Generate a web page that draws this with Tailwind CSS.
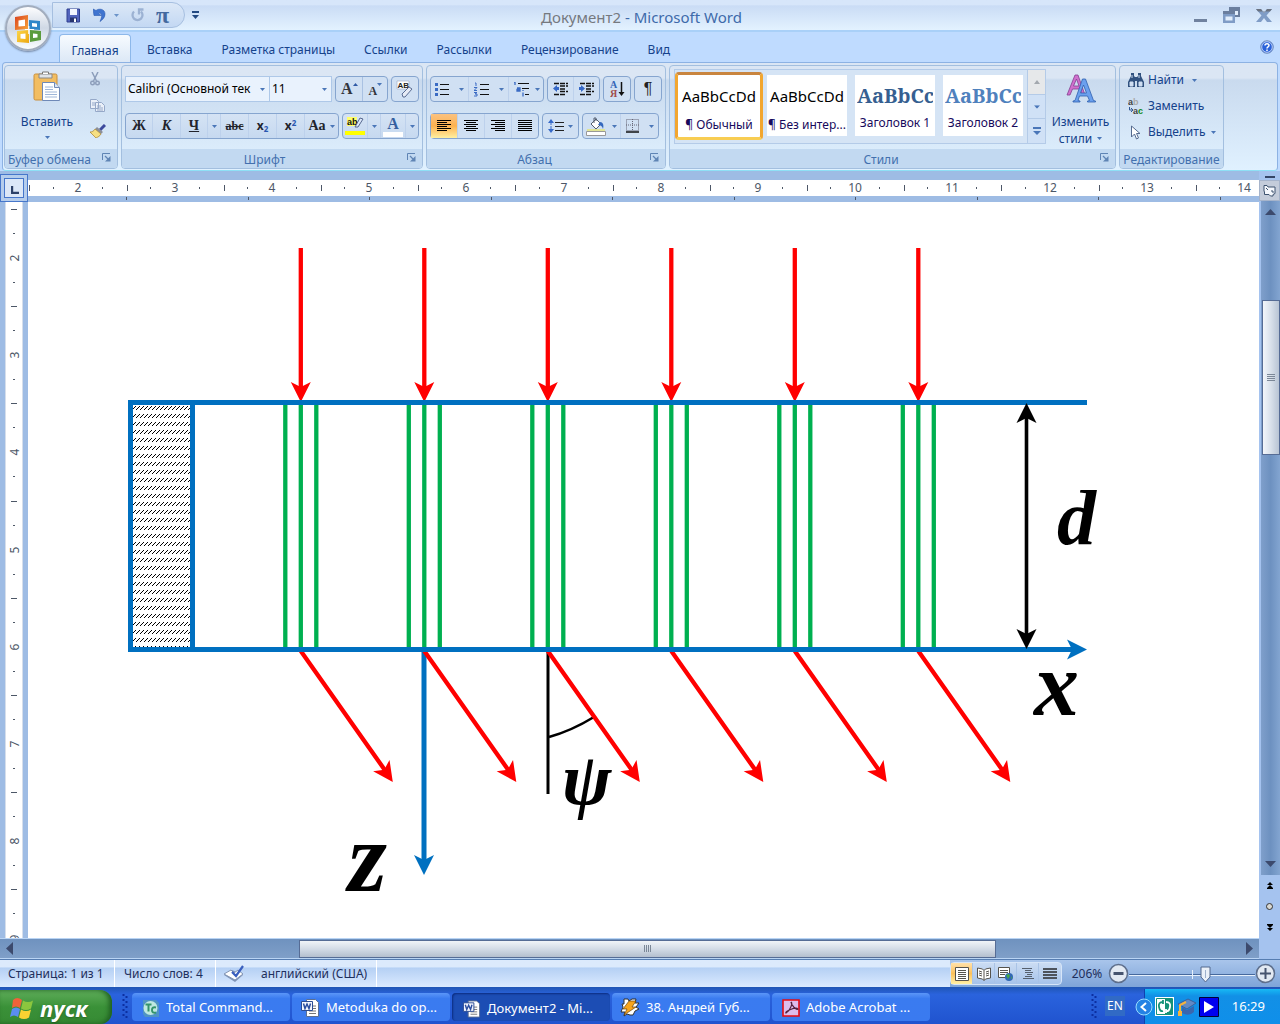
<!DOCTYPE html>
<html lang="ru">
<head>
<meta charset="utf-8">
<title>Документ2 - Microsoft Word</title>
<script src="https://cdn.jsdelivr.net/npm/@tailwindcss/browser@4"></script>
</head>
<body class="flex h-screen flex-col overflow-hidden bg-[#bfdbff] font-['Noto_Sans',sans-serif] text-xs text-[#15428b]">
<svg class="absolute size-0" aria-hidden="true">
  <defs>
    <symbol id="caret" viewBox="0 0 5 3"><path d="M0 0h5L2.500 3z" fill="#4a76b8"/></symbol>
    <symbol id="launch" viewBox="0 0 9 9"><path d="M.5 7V.5H8" fill="none" stroke="#5f84b4"/><path d="M3 3l3 3" stroke="#5f84b4" stroke-width="1.200"/><path d="M8.500 3v5.500H3z" fill="#5f84b4"/></symbol>
    <symbol id="word" viewBox="0 0 20 20"><path d="M6.500 1.500h9l3 3v14h-12z" fill="#fff" stroke="#5b6f93"/><path d="M9 8h7M9 10.500h7M9 13h7M9 15.500h7" stroke="#777"/><path d="M1.500 3.500h11v9h-11z" fill="#f4f7ff" stroke="#2b4c94"/><path d="M3.500 5.500l1.500 5 2-4.500 2 4.500 1.500-5" fill="none" stroke="#2a4da0" stroke-width="1.500"/></symbol>
    <linearGradient id="orange" x2="1" y2="1"><stop stop-color="#d9411e"/><stop offset="1" stop-color="#f9a63a"/></linearGradient>
    <linearGradient id="yellow" x2="1" y2="1"><stop stop-color="#fbd64a"/><stop offset="1" stop-color="#eda60f"/></linearGradient>
  </defs>
</svg>

<header class="relative shrink-0">
  <div class="flex h-8 items-center border-b-2 border-[#a9d0f8] bg-linear-to-b from-[#d7e6fa] from-15% via-[#cadcf5] via-20% to-[#e3f2ff] pl-[52px]">
    <div class="flex h-[26px] w-[133px] items-center rounded-r-full border border-[#a6bfe0] bg-linear-to-b from-[#dce8f7] to-[#c3d8f3] pl-[13px]">
      <button aria-label="Сохранить" class="w-[27px]"><svg width="15" height="15" viewBox="0 0 15 15"><path d="M1 1h12.500v13H1z" fill="#5264bd" stroke="#2e3f8f"/><path d="M4 1h7v6H4z" fill="#f3f6ff"/><path d="M4 9.500h7V14H4z" fill="#27346f"/><path d="M8 10.500h2V14H8z" fill="#fff"/></svg></button>
      <button aria-label="Отменить" class="w-[38px]"><svg width="26" height="14" viewBox="0 0 26 14"><path d="M0 1l3 1.500C6 0 12 1 12 6c0 4-3 6-5 7.500C8 11 9 9 8.500 7 8 5 6 4.500 5.500 5L8 7.500H1z" fill="#3f74d0" stroke="#2a59b0" stroke-width=".6"/><path d="M21 6h5l-2.500 3z" fill="#6b93c9"/></svg></button>
      <button aria-label="Повторить" class="w-[25px]"><svg width="14" height="14" viewBox="0 0 14 14"><path d="M3 3.500a5 5 0 1 0 7 0M12.500 1.500H8v5" fill="none" stroke="#9cb2d3" stroke-width="2.300"/></svg></button>
      <button aria-label="Формула" class="font-['Liberation_Serif',serif] text-2xl leading-6 font-bold text-[#44699f]">π</button>
    </div>
    <button aria-label="Настройка панели" class="ml-[7px]"><svg width="7" height="9" viewBox="0 0 7 9"><path d="M0 0h7v2H0zM0 4h7L3.500 8z" fill="#234a82"/></svg></button>
    <h1 class="grow pt-1 pr-3.5 text-center text-[15px] text-[#3e6aaa]"><span class="text-[#75797f]">Документ2</span> - Microsoft Word</h1>
    <div class="flex items-center gap-4 pr-2 pl-24">
      <button aria-label="Свернуть" class="mt-3"><svg width="13" height="4"><path d="M0 0h13v3H0z" fill="#70829f"/></svg></button>
      <button aria-label="Восстановить"><svg width="17" height="16" viewBox="0 0 17 16"><path d="M6 0h11v10H6z" fill="#6a7e9e"/><path d="M8 4h7v4H8z" fill="#e2eefc"/><path d="M0 4h12v12H0z" fill="#7f9cc6"/><path d="M0 4h12v3H0z" fill="#6a7e9e"/><path d="M2.500 9.500h7v4h-7z" fill="#e2eefc"/></svg></button>
      <button aria-label="Закрыть"><svg width="16" height="13" viewBox="0 0 16 13"><path d="M0 0h5l3 4 3-4h5l-5.500 6.500L16 13h-5L8 9l-3 4H0l5.500-6.500z" fill="#7f9cc6"/><path d="M0 0h5l3 4 3-4h5l-2 2.500H2z" fill="#6a7280"/></svg></button>
    </div>
  </div>
  <nav class="flex h-[30px] items-end gap-[5px] pr-1.5 pl-[59px] text-xs">
    <button class="h-7 w-[72px] rounded-t border border-b-0 border-[#8db8ea] bg-linear-to-b from-[#f7fbff] to-[#dce8f6] pt-1">Главная</button>
    <button class="-ml-px h-7 px-3 pt-1">Вставка</button>
    <button class="h-7 px-3 pt-1">Разметка страницы</button>
    <button class="h-7 px-3 pt-1">Ссылки</button>
    <button class="h-7 px-3 pt-1">Рассылки</button>
    <button class="h-7 px-3 pt-1">Рецензирование</button>
    <button class="h-7 px-3 pt-1">Вид</button>
    <button aria-label="Справка" class="mb-2 ml-auto"><svg width="14" height="14" viewBox="0 0 14 14"><circle cx="7" cy="7" r="6.300" fill="#2b62d9" stroke="#7a94bd"/><circle cx="7" cy="7" r="5.300" fill="none" stroke="#dce9ff" stroke-width=".8"/><path d="M5 5.500c0-2.500 4-2.300 4 0C9 7 7 6.800 7 8.500M7 9.500v1.500" fill="none" stroke="#fff" stroke-width="1.500"/></svg></button>
  </nav>
  <button aria-label="Office" class="absolute top-[5px] left-[5px] size-[46px] rounded-full border-2 border-[#a2adbe] bg-linear-to-b from-[#fdfdfe] via-[#cfd8e5] to-[#fbfdff] shadow-[0_1px_2px_#6f819e]">
    <svg class="mx-auto" width="32" height="32" viewBox="0 0 32 32" fill="none"><path d="M3 5l13-2v14l-13 1z" fill="url(#orange)"/><path d="M6.500 8.500l6.500-1v6.500l-6.500.500z" fill="#fff"/><path d="M17 8l11 1v9l-11-1z" fill="#2f86c9"/><path d="M20 11l5 .5v3.500l-5-.5z" fill="#fff"/><path d="M5 19l12-1v13l-12-1z" fill="url(#yellow)"/><path d="M8.500 22l5-.5v5.500l-5-.5z" fill="#fff"/><path d="M18 18l11 1v9l-11 2z" fill="#5b9b3c"/><path d="M21 21.500l4.500.500v3.500l-4.500.500z" fill="#fff"/><path d="M13 17.500h9M16.800 14v8" stroke="#fff" stroke-width="1.200"/></svg>
  </button>
</header>

<section aria-label="Лента" class="mx-0.5 flex h-[109px] shrink-0 gap-[3px] rounded border border-[#8db2e3] border-b-[#8ee0f5] bg-linear-to-b from-[#dbe6f4] from-14% via-[#c9daee] via-16% to-[#e0f1ff] pt-0.5 pb-px pl-px">
  <div class="flex w-[114px] flex-col overflow-hidden rounded border border-[#a3bfdf]">
    <div class="flex grow">
      <button class="flex w-[84px] flex-col items-center pt-1">
        <svg width="28" height="32" viewBox="0 0 28 32"><rect x="1" y="4" width="23" height="26" rx="1.500" fill="#f2bd61" stroke="#c98f3c"/><path d="M6 4h13v4H6z" fill="#dfe3e8" stroke="#888"/><path d="M9.500 4V2h6v2" fill="#fff" stroke="#777"/><path d="M9.500 12.500h12l5 5v13h-17z" fill="#fff" stroke="#6f89b7"/><path d="M21.500 12.500v5h5" fill="#dbe5f3" stroke="#6f89b7"/><path d="M12 17h8M12 19.500h8M12 22h12M12 24.500h12M12 27h12" stroke="#9fb6d8"/></svg>
        <span class="mt-2.5 leading-5">Вставить</span>
        <svg class="mt-1" width="5" height="3"><use href="#caret"/></svg>
      </button>
      <div class="flex flex-col items-start gap-3 pt-1.5 pl-px">
        <button aria-label="Вырезать" class="h-3.5"><svg width="10" height="14" viewBox="0 0 10 14"><path d="M2 0l4.500 9M8 0L3.500 9" stroke="#8d9ebb" stroke-width="1.500"/><circle cx="2.500" cy="11" r="1.800" fill="none" stroke="#8d9ebb" stroke-width="1.400"/><circle cx="7.500" cy="11" r="1.800" fill="none" stroke="#8d9ebb" stroke-width="1.400"/></svg></button>
        <button aria-label="Копировать" class="h-3.5"><svg width="15" height="13" viewBox="0 0 15 13" fill="#eaf0f9" stroke="#95a8c8"><path d="M.5.5h6l2 2v7h-8zM5.500 3.500h6l3 3v6h-9z"/><path d="M2 4h3M2 6h3M7 7h4M7 9h6M7 11h6"/></svg></button>
        <button aria-label="Формат по образцу" class="h-3.5"><svg width="16" height="14" viewBox="0 0 16 14"><path d="M15 1l-5 5" stroke="#3d4a9d" stroke-width="3"/><path d="M7 3l6 5-2 2-6-5z" fill="#8b8f98"/><path d="M5 5l6 5c-1 2-3 3-5 4L0 8c2 0 4-1 5-3z" fill="#f5df82" stroke="#a67f2c" stroke-width=".7"/></svg></button>
      </div>
    </div>
    <footer class="flex h-[19px] items-center bg-[#c2d9f1] pt-0.5 text-[#4370ae]"><span class="grow text-center whitespace-nowrap">Буфер обмена</span><button aria-label="Буфер обмена: параметры" class="mr-1.5 mb-1 ml-2"><svg width="9" height="9"><use href="#launch"/></svg></button></footer>
  </div>

  <div class="flex w-[302px] flex-col overflow-hidden rounded border border-[#a3bfdf]">
    <div class="flex grow flex-col gap-[11px] px-[3px] pt-2.5">
      <div class="flex h-[26px] gap-[3px]">
        <div class="flex">
          <label class="flex w-[145px] items-center border border-[#aec8e8] bg-[#e9f2fd] pr-1"><select aria-label="Шрифт" class="min-w-0 grow appearance-none overflow-hidden pl-0.5 text-xs text-black"><option>Calibri (Основной тек</option></select><svg class="ml-1 shrink-0" width="5" height="3"><use href="#caret"/></svg></label>
          <label class="flex w-[62px] items-center border border-l-0 border-[#aec8e8] bg-[#e9f2fd] pr-1"><select aria-label="Размер шрифта" class="min-w-0 grow appearance-none pl-0.5 text-xs text-black"><option>11</option></select><svg class="shrink-0" width="5" height="3"><use href="#caret"/></svg></label>
        </div>
        <div class="flex w-[53px] divide-x divide-[#a9c1e2] rounded-sm border border-[#86a5cf] bg-[#d0e0f3] font-['Liberation_Serif',serif] font-bold text-[#33353c]">
          <button class="flex grow items-center justify-center text-base" aria-label="Увеличить размер">A<svg class="mb-2.5" width="5" height="3"><path d="M0 3h5L2.500 0z" fill="#2f59a5"/></svg></button>
          <button class="flex grow items-center justify-center pt-1 text-xs" aria-label="Уменьшить размер">A<svg class="mb-3.5" width="5" height="3"><use href="#caret"/></svg></button>
        </div>
        <button aria-label="Очистить формат" class="flex w-7 items-center justify-center rounded-sm border border-[#86a5cf] bg-[#d0e0f3]"><svg width="18" height="18" viewBox="0 0 18 18"><path d="M1 1h12v8H1z" fill="#fff" stroke="#9aa9c2" stroke-width=".6"/><text x="1.500" y="8" font-family="Liberation Sans" font-weight="bold" font-size="8" fill="#222">AB</text><path d="M6 14l7-7 3 2-7 8H7z" fill="#e6ebf5" stroke="#596c92"/></svg></button>
      </div>
      <div class="flex h-[26px] gap-[3px] font-['Liberation_Serif',serif] text-base font-bold text-[#22242c]">
        <div class="flex w-[214px] divide-x divide-[#bdd1ec] rounded-sm border border-[#86a5cf] bg-linear-to-b from-[#d5e3f4] to-[#c6d9f0]">
          <button class="w-[27px] text-sm">Ж</button>
          <button class="w-7 text-sm italic">К</button>
          <button class="w-[27px] text-sm underline">Ч</button>
          <button aria-label="Вид подчёркивания" class="flex w-[13px] items-center justify-center"><svg width="5" height="3"><use href="#caret"/></svg></button>
          <button class="w-7 text-xs line-through">abc</button>
          <button class="w-7 font-['Noto_Sans',sans-serif] text-xs leading-4">x<sub class="text-[8px] text-[#2a57b0]">2</sub></button>
          <button class="w-7 font-['Noto_Sans',sans-serif] text-xs leading-4">x<sup class="text-[8px] text-[#2a57b0]">2</sup></button>
          <button class="flex grow items-center justify-center gap-1 text-sm">Aa<svg width="5" height="3"><use href="#caret"/></svg></button>
        </div>
        <div class="flex w-[77px] divide-x divide-[#bdd1ec] rounded-sm border border-[#86a5cf] bg-linear-to-b from-[#d5e3f4] to-[#c6d9f0]">
          <button aria-label="Цвет выделения" class="flex w-[25px] items-center justify-center"><svg width="20" height="20" viewBox="0 0 20 20"><path d="M2 1h10v9H2z" fill="#ffff6a"/><text x="2" y="9" font-family="Liberation Sans" font-size="9" font-weight="bold" fill="#111">ab</text><path d="M10 11l5-9 3 1-5 8z" fill="#dce8fa" stroke="#586990"/><path d="M0 15h20v4H0z" fill="#ff0"/></svg></button>
          <button aria-label="Цвета выделения" class="flex w-[13px] items-center justify-center"><svg width="5" height="3"><use href="#caret"/></svg></button>
          <button aria-label="Цвет текста" class="flex w-[25px] flex-col items-center pt-0.5 text-base leading-4 text-[#355f9f]">A<span class="h-[5px] w-5 bg-white"></span></button>
          <button aria-label="Цвета текста" class="flex grow items-center justify-center"><svg width="5" height="3"><use href="#caret"/></svg></button>
        </div>
      </div>
    </div>
    <footer class="flex h-[19px] items-center bg-[#c2d9f1] pt-0.5 text-[#4370ae]"><span class="grow text-center">Шрифт</span><button aria-label="Шрифт: параметры" class="mr-1.5 mb-1"><svg width="9" height="9"><use href="#launch"/></svg></button></footer>
  </div>

  <div class="flex w-60 flex-col overflow-hidden rounded border border-[#a3bfdf]">
    <div class="flex grow flex-col gap-[11px] px-[3px] pt-2.5">
      <div class="flex h-[26px] gap-[3px]">
        <div class="flex w-[114px] divide-x divide-[#bdd1ec] rounded-sm border border-[#86a5cf] bg-[#d0e0f3]">
          <button aria-label="Маркеры" class="flex w-[38px] items-center justify-center gap-2.5"><svg width="14" height="13" viewBox="0 0 14 13"><path d="M0 0h3v3H0zM0 5h3v3H0zM0 10h3v3H0z" fill="#3a6bc4"/><path d="M5 1.500h9M5 6.500h9M5 11.500h9" stroke="#111"/></svg><svg width="5" height="3"><use href="#caret"/></svg></button>
          <button aria-label="Нумерация" class="flex w-10 items-center justify-center gap-2.5"><svg width="15" height="15" viewBox="0 0 15 15"><path d="M1 1h1v3M0 5.500h3l-3 3h3M0 10.500h3l-2 1.500h2v2H0" fill="none" stroke="#3a6bc4"/><path d="M6 2.500h9M6 7.500h9M6 12.500h9" stroke="#111"/></svg><svg width="5" height="3"><use href="#caret"/></svg></button>
          <button aria-label="Многоуровневый список" class="flex grow items-center justify-center gap-1"><svg width="18" height="15" viewBox="0 0 18 15"><path d="M1 0h1v3M4 6h3v3H4V7.500h3M10 8v1m0 1.500v4" fill="none" stroke="#3a6bc4" stroke-width="1.300"/><path d="M5 1.500h11M9 6.500h7M12 12.500h4" stroke="#111"/></svg><svg width="5" height="3"><use href="#caret"/></svg></button>
        </div>
        <div class="flex w-[53px] divide-x divide-[#bdd1ec] rounded-sm border border-[#86a5cf] bg-[#d0e0f3]">
          <button aria-label="Уменьшить отступ" class="flex grow items-center justify-center"><svg width="16" height="14" viewBox="0 0 16 14"><path d="M1 1.500h14M7 4h8M7 7h6M7 9.500h8M1 12.500h12" stroke="#111" stroke-width="1.300" stroke-dasharray="5 1"/><path d="M0 6.500L4 3v2h2v3H4v2z" fill="#3669c8"/></svg></button>
          <button aria-label="Увеличить отступ" class="flex grow items-center justify-center"><svg width="16" height="14" viewBox="0 0 16 14"><path d="M1 1.500h14M7 4h8M7 7h6M7 9.500h8M1 12.500h12" stroke="#111" stroke-width="1.300" stroke-dasharray="5 1"/><path d="M6 6.500L2 3v2H0v3h2v2z" fill="#3669c8"/></svg></button>
        </div>
        <button aria-label="Сортировка" class="flex w-7 items-center justify-center rounded-sm border border-[#86a5cf] bg-[#d0e0f3]"><svg width="15" height="18" viewBox="0 0 15 18" font-family="Liberation Serif" font-size="10" font-weight="bold"><text x="0" y="8" fill="#3566b8">A</text><text x="0" y="17" fill="#a04c4c">Я</text><path d="M11.500 2v11" stroke="#111" stroke-width="1.500"/><path d="M8.500 12h6l-3 4z" fill="#111"/></svg></button>
        <button class="w-7 rounded-sm border border-[#86a5cf] bg-[#d0e0f3] font-['Liberation_Sans',sans-serif] text-base text-[#222]">¶</button>
      </div>
      <div class="flex h-[26px] gap-[3px]">
        <div class="flex w-[109px] divide-x divide-[#bdd1ec] rounded-sm border border-[#86a5cf] bg-[#d0e0f3] stroke-black">
          <button aria-label="По левому краю" class="flex w-[27px] items-center justify-center bg-linear-to-b from-[#fbc27f] via-[#fdb24f] to-[#fff0a0]"><svg width="14" height="12"><path d="M0 .5h14M0 2.500h10M0 4.500h14M0 6.500h10M0 8.500h14M0 10.500h10"/></svg></button>
          <button aria-label="По центру" class="flex w-[27px] items-center justify-center"><svg width="14" height="12"><path d="M0 .5h14M2 2.500h10M0 4.500h14M2 6.500h10M0 8.500h14M2 10.500h10"/></svg></button>
          <button aria-label="По правому краю" class="flex w-[27px] items-center justify-center"><svg width="14" height="12"><path d="M0 .5h14M4 2.500h10M0 4.500h14M4 6.500h10M0 8.500h14M4 10.500h10"/></svg></button>
          <button aria-label="По ширине" class="flex grow items-center justify-center"><svg width="14" height="12"><path d="M0 .5h14M0 2.500h14M0 4.500h14M0 6.500h14M0 8.500h14M0 10.500h14"/></svg></button>
        </div>
        <button aria-label="Междустрочный интервал" class="flex w-[37px] items-center justify-center gap-1 rounded-sm border border-[#86a5cf] bg-[#d0e0f3]"><svg width="16" height="16" viewBox="0 0 16 16"><path d="M3 3v10" stroke="#3669c8" stroke-dasharray="4 1"/><path d="M0 5l3-4 3 4zM0 11l3 4 3-4z" fill="#3669c8"/><path d="M7 4.500h9M7 8.500h9M7 12.500h9" stroke="#222"/></svg><svg width="5" height="3"><use href="#caret"/></svg></button>
        <div class="flex w-[77px] divide-x divide-[#bdd1ec] rounded-sm border border-[#86a5cf] bg-[#d0e0f3]">
          <button aria-label="Заливка" class="flex w-[38px] items-center justify-center gap-1.5"><svg width="20" height="19" viewBox="0 0 20 19"><path d="M5 7l5-5 5 5-5 5z" fill="#fff" stroke="#555f70"/><path d="M8 6V1h2v3" fill="none" stroke="#555f70"/><path d="M14 5c3 0 4 3 3 7-1-3-2-4-5-4z" fill="#3568be"/><path d="M.5 14.500h19v4H.5z" fill="#fff" stroke="#999"/><path d="M1 13h18" stroke="#f0e838"/></svg><svg width="5" height="3"><use href="#caret"/></svg></button>
          <button aria-label="Границы" class="flex grow items-center justify-center gap-2.5"><svg width="13" height="14" viewBox="0 0 13 14"><path d="M.5.500h12v11H.5zM6.500 0v12M0 6h13" fill="none" stroke="#667" stroke-dasharray="1 1"/><path d="M0 13h13" stroke="#111" stroke-width="1.500"/></svg><svg width="5" height="3"><use href="#caret"/></svg></button>
        </div>
      </div>
    </div>
    <footer class="flex h-[19px] items-center bg-[#c2d9f1] pt-0.5 text-[#4370ae]"><span class="grow pr-2 text-center">Абзац</span><button aria-label="Абзац: параметры" class="mr-1.5 mb-1"><svg width="9" height="9"><use href="#launch"/></svg></button></footer>
  </div>

  <div class="flex grow flex-col overflow-hidden rounded border border-[#a3bfdf]">
    <div class="flex grow items-start pt-[3px] pl-1">
      <div class="flex h-[75px] border border-[#b4cbe8] bg-[#d5e4f5] text-[#170a5c]">
        <button class="mt-0.5 flex h-[68px] w-[88px] flex-col overflow-hidden rounded-sm border-3 border-[#f2a62f] border-t-[#c9853f] border-b-[#f8cd52] bg-white pt-[5px] whitespace-nowrap"><span class="w-full text-center text-[15px] leading-8 text-black">AaBbCcDd</span><span class="w-full text-center leading-[26px]">¶ Обычный</span></button>
        <div class="flex gap-2 px-1 pt-[5px]">
          <button class="flex h-[61px] w-20 flex-col overflow-hidden bg-white pt-[5px] text-center whitespace-nowrap"><span class="w-full text-[15px] leading-8 text-black">AaBbCcDd</span><span class="w-full leading-[26px]">¶ Без интер...</span></button>
          <button class="flex h-[61px] w-20 flex-col overflow-hidden bg-white px-0.5 pt-[5px] whitespace-nowrap"><span class="w-full overflow-hidden text-left font-['Noto_Serif','DejaVu_Serif',serif] text-xl leading-8 font-bold text-[#365f91]">AaBbCc</span><span class="w-full text-center leading-[26px]">Заголовок 1</span></button>
          <button class="flex h-[61px] w-20 flex-col overflow-hidden bg-white px-0.5 pt-[5px] whitespace-nowrap"><span class="w-full overflow-hidden text-left font-['Noto_Serif','DejaVu_Serif',serif] text-xl leading-8 font-bold text-[#4f81bd]">AaBbCc</span><span class="w-full text-center leading-[26px]">Заголовок 2</span></button>
        </div>
        <div class="flex w-[18px] flex-col divide-y divide-[#b4cbe8] border-l border-[#b4cbe8]">
          <button aria-label="Вверх" class="flex flex-1 items-center justify-center bg-[#e6e8ea]"><svg width="6" height="4"><path d="M0 4h6L3 0z" fill="#a3a8ae"/></svg></button>
          <button aria-label="Вниз" class="flex flex-1 items-center justify-center bg-[#d0e1f6]"><svg width="6" height="4" viewBox="0 0 5 3"><use href="#caret"/></svg></button>
          <button aria-label="Дополнительно" class="flex flex-1 items-center justify-center bg-[#d0e1f6]"><svg width="8" height="8"><path d="M0 0h8v2H0zM0 4h8L4 8z" fill="#4a76b8"/></svg></button>
        </div>
      </div>
      <button class="flex grow flex-col items-center pt-1"><svg width="30" height="32" viewBox="0 0 30 32"><path fill-rule="evenodd" d="M1 22L9 2h3l7 20h-3l-2-6H6.500l-2.500 6zM7.500 13h5.500L10.500 6z" fill="#d070cd" stroke="#833f91" stroke-width=".8"/><path fill-rule="evenodd" d="M7 29v-1l2-.5L16.500 6h3L27.500 27.500l2 .5v1h-8v-1l2-.5-2-4.500h-8l-1.500 4.500 2 .5v1zM14.500 20h6l-3-8z" fill="#6ba0ee" stroke="#2f5fae" stroke-width=".8"/></svg><span class="mt-2 leading-[17px]">Изменить<br>стили <svg class="mb-0.5 ml-0.5 inline" width="5" height="3"><use href="#caret"/></svg></span></button>
    </div>
    <footer class="flex h-[19px] items-center bg-[#c2d9f1] pt-0.5 text-[#4370ae]"><span class="grow pr-2 text-center">Стили</span><button aria-label="Стили: параметры" class="mr-1.5 mb-1"><svg width="9" height="9"><use href="#launch"/></svg></button></footer>
  </div>

  <div class="mr-[53px] flex w-[105px] flex-col overflow-hidden rounded border border-[#a3bfdf]">
    <div class="flex grow flex-col pt-px pl-2">
      <button class="flex h-[26px] items-center gap-1"><svg width="16" height="14" viewBox="0 0 16 14"><path d="M3 0h3v3l1 1h2l1-1V0h3v3l3 6v5H9V8H7v6H0V9l3-6z" fill="#31517f"/><path d="M2 9h3v4H2zM11 9h3v4h-3zM4 2v3M11 2v3" fill="#cfdef2" stroke="#cfdef2"/></svg>Найти<svg class="ml-1" width="5" height="3"><use href="#caret"/></svg></button>
      <button class="flex h-[26px] items-center gap-1"><svg width="16" height="18" viewBox="0 0 16 18" font-family="Liberation Sans" font-weight="bold" font-size="9"><text y="8" fill="#444">a<tspan fill="#aaa">b</tspan></text><text x="5" y="17" fill="#444">a<tspan fill="#118a22">c</tspan></text><path d="M1.500 10v3h3M3 11l2 2-2 2" fill="none" stroke="#315894"/></svg>Заменить</button>
      <button class="flex h-[26px] items-center gap-1 whitespace-nowrap"><svg width="16" height="15" viewBox="0 0 16 15"><path d="M3.500 1v11l3-3 2 5 2-1-2-4.500h3.500z" fill="#fff" stroke="#566b8f"/></svg>Выделить<svg class="ml-0.5" width="5" height="3"><use href="#caret"/></svg></button>
    </div>
    <footer class="flex h-[19px] items-center justify-center bg-[#c2d9f1] pt-0.5 text-[#4370ae]">Редактирование</footer>
  </div>
</section>

<main class="flex min-h-0 grow bg-[#9ebce4]">
  <div class="flex min-w-0 grow flex-col">
    <div class="flex h-[31px] shrink-0">
      <div class="flex w-7 items-end"><button aria-label="Табуляция" class="flex size-7 items-center justify-center border border-[#4677cb] bg-[#b5cdec]"><span class="flex size-5 items-center justify-center border border-[#4677cb] bg-[#dbe7f7] pt-1 pl-0.5"><svg width="8" height="8"><path d="M1 0v7h7" fill="none" stroke="#2c4168" stroke-width="2.400"/></svg></span></button></div>
      <svg id="hruler" class="h-full min-w-0 grow fill-[#4d5767] text-xs" aria-hidden="true"><rect y="9" width="100%" height="16" fill="#fff"/></svg>
    </div>
    <div class="flex min-h-0 grow">
      <svg id="vruler" class="h-full w-7 shrink-0 fill-[#4d5767] text-xs" aria-hidden="true"><rect x="5" width="18" height="100%" fill="#d5deeb"/><rect x="6" width="16" height="100%" fill="#fff"/></svg>
      <div class="min-w-0 grow bg-white">
        <svg class="size-full" viewBox="28 202 1231 736" preserveAspectRatio="xMinYMin meet" role="img" aria-label="Схема прохождения лучей через слой толщиной d">
          <defs>
            <pattern id="hatch" x="132" y="406" width="4" height="8" patternUnits="userSpaceOnUse"><path d="M0 3h1v1H0zM1 2h1v1H1zM2 1h1v1H2zM3 0h1v1H3z" shape-rendering="crispEdges"/></pattern>
            <path id="head" d="M0 0L-20 -10L-15 0L-20 10z"/>
            <g id="ray">
              <path d="M-15.500 404v245M0 404v245M15.500 404v245" stroke="#00b050" stroke-width="4.300"/>
              <path d="M0 248v142M0 651l84 119" stroke="#f00" stroke-width="4.300"/>
              <use href="#head" transform="translate(0 402) rotate(90)" fill="#f00"/>
              <use href="#head" transform="translate(92 782) rotate(55)" fill="#f00"/>
            </g>
          </defs>
          <rect x="133" y="404" width="58" height="244" fill="url(#hatch)"/>
          <path d="M424 650v212" stroke="#0070c0" stroke-width="5"/>
          <path d="M548 650v144" stroke="#000" stroke-width="3"/>
          <path d="M549 737q22-6 45-20" fill="none" stroke="#000" stroke-width="2.500"/>
          <g id="rays"></g>
          <path d="M1087 402.500H130.500v247H1073M192.500 402.500v247" fill="none" stroke="#0070c0" stroke-width="5"/>
          <use href="#head" transform="translate(1087 649.500)" fill="#0070c0"/>
          <use href="#head" transform="translate(424 875) rotate(90)" fill="#0070c0"/>
          <path d="M1026.500 414v224" stroke="#000" stroke-width="3.600"/>
          <use href="#head" transform="translate(1026.500 403) rotate(-90)"/>
          <use href="#head" transform="translate(1026.500 649) rotate(90)"/>
          <g class="font-['Liberation_Serif',serif] font-bold italic">
            <text x="1057" y="544" font-size="78">d</text>
            <text x="1034" y="715" font-size="90">x</text>
            <text x="348" y="891" font-size="100">z</text>
            <text x="562" y="804" font-size="74">ψ</text>
          </g>
        </svg>
      </div>
    </div>
    <div class="flex h-[21px] shrink-0 items-center border-y border-[#b9d4f4] bg-linear-to-b from-[#6f92bf] to-[#7f9fc8] px-1.5">
      <button aria-label="Влево"><svg width="7" height="13"><path d="M7 0v13L0 6.500z" fill="#3c4a6d"/></svg></button>
      <div class="flex grow px-[5px]"><div class="w-[23%]"></div><div class="flex h-[18px] w-[57%] items-center justify-center border border-[#566c95] bg-linear-to-b from-[#f1f4f8] via-[#d3dbe6] to-[#b4bfce]"><svg width="8" height="7"><path d="M.5 0v7M2.500 0v7M4.500 0v7M6.500 0v7" stroke="#7b8797"/></svg></div></div>
      <button aria-label="Вправо"><svg width="7" height="13"><path d="M0 0v13l7-6.500z" fill="#3c4a6d"/></svg></button>
    </div>
  </div>
  <div class="flex w-[21px] shrink-0 flex-col items-center bg-[#a5c3ef]">
    <div class="mt-[5px] h-0.5 w-2.5 shrink-0 bg-[#344567]"></div>
    <button aria-label="Линейка" class="mt-0.5 flex size-[21px] shrink-0 items-center justify-center border border-[#a6b4cb] bg-[#c4ccda]"><svg width="13" height="12" viewBox="0 0 13 12" fill="#f5f8fd" stroke="#3e536f"><path d="M1 .5h3l1 1.500h7v6.500l-2 1V11H7.500L6 9.500H1.500V7L1 6z"/><path d="M3 3l2 2M8 6h2v2"/></svg></button>
    <div class="flex w-full grow flex-col items-center border-l-2 border-[#a5c3ef] bg-linear-to-r from-[#7f9fcb] via-[#6d91c0] to-[#83a5d1] pt-2">
      <button aria-label="Вверх"><svg width="11" height="6"><path d="M0 6h11L5.500 0z" fill="#3c4a6d"/></svg></button>
      <div class="mt-[85px] flex h-[155px] w-[18px] items-center justify-center border border-[#566c95] bg-linear-to-r from-[#f3f6fa] via-[#d8e0ea] to-[#b8c4d4]"><svg width="8" height="8"><path d="M0 .5h8M0 2.500h8M0 4.500h8M0 6.500h8" stroke="#7b8797"/></svg></div>
      <button aria-label="Вниз" class="mt-auto mb-2"><svg width="11" height="6"><path d="M0 0h11L5.500 6z" fill="#3c4a6d"/></svg></button>
    </div>
    <div class="flex h-[84px] shrink-0 flex-col items-center gap-3.5 pt-[7px]">
      <button aria-label="Предыдущая страница" class="h-[7px]"><svg class="block" width="6" height="7"><path d="M0 3h6L3 0zM0 6h6L3 3zM0 6h6v1H0z"/></svg></button>
      <button aria-label="Выбор объекта" class="h-[7px]"><svg class="block" width="7" height="7"><circle cx="3.500" cy="3.500" r="3" fill="#d9d9d4" stroke="#333"/></svg></button>
      <button aria-label="Следующая страница" class="h-[7px]"><svg class="block" width="6" height="7"><path d="M0 0h6v1H0zM0 1h6L3 4zM0 4h6L3 7z"/></svg></button>
    </div>
  </div>
</main>

<footer class="flex h-7 shrink-0 items-stretch border-t border-[#567db1] bg-linear-to-b from-[#dceafc] from-25% via-[#b5d0f4] via-30% to-[#dbeaff] text-[#1e2f5c]">
  <span class="flex w-[115px] items-center border-r border-white pl-2">Страница: 1 из 1</span>
  <span class="flex w-[101px] items-center border-r border-white pl-[9px]">Число слов: 4</span>
  <button aria-label="Правописание" class="flex w-9 items-center justify-center"><svg width="20" height="18" viewBox="0 0 20 18"><path d="M0 10l8-5 11 5-8 7z" fill="#7f93b6"/><path d="M0 9l7-4 3 3 4-3 5 4-8 6z" fill="#fff" stroke="#8294b3"/><path d="M8 7l4 4 7-10" fill="none" stroke="#3a5fbe" stroke-width="2.200"/></svg></button>
  <button class="border-r border-white px-[9px]">английский (США)</button>
  <div class="ml-auto flex items-center bg-linear-to-b from-[#a9c5eb] to-[#7ea4d8]">
    <div class="mr-2 flex h-[23px] divide-x divide-[#a9c3e6] rounded-sm border border-[#d6e5f8] bg-linear-to-b from-[#cbdcf3] to-[#a6c3ea]">
      <button aria-label="Разметка страницы" class="flex w-[22px] items-center justify-center bg-linear-to-b from-[#ffe1a9] via-[#fdc15a] to-[#fff0a5]"><svg width="14" height="14" viewBox="0 0 14 14" fill="#fff" stroke="#56534d"><path d="M.5.500h13v13H.5zM3 3.500h8M3 5.500h8M3 7.500h8M3 9.500h8M3 11.500h8"/></svg></button>
      <button aria-label="Режим чтения" class="flex w-[22px] items-center justify-center"><svg width="14" height="14" viewBox="0 0 14 14" fill="#fff" stroke="#56534d"><path d="M.5 1l5 1 1.500 1.500L8.500 2l5-1v10l-5 1L7 13.500 5.500 12l-5-1zM7 3.500v10M2 4l3 1M2 6l3 1M2 8l3 1M12 4L9 5M12 6L9 7M12 8L9 9"/></svg></button>
      <button aria-label="Веб-документ" class="flex w-[22px] items-center justify-center"><svg width="15" height="14" viewBox="0 0 15 14"><path d="M.5.500h11v10H.5z" fill="#fff" stroke="#56534d"/><path d="M2 3.500h8M2 5.500h8M2 7.500h5" stroke="#56534d"/><circle cx="11" cy="10" r="4" fill="#3268b4"/><path d="M8 8l3-1 1 2-2 3zM13 11l1-2v3z" fill="#47a645"/></svg></button>
      <button aria-label="Структура" class="flex w-[22px] items-center justify-center"><svg width="12" height="12" stroke="#56606e"><path d="M0 .5h10M3 2.500h6M3 4.500h8M5 6.500h5M3 8.500h7M1 10.500h11"/></svg></button>
      <button aria-label="Черновик" class="flex w-[22px] items-center justify-center"><svg width="14" height="12" stroke="#4d535c" stroke-width="2"><path d="M0 1h14M0 4h14M0 7h14M0 10h14"/></svg></button>
    </div>
    <button class="w-[34px]">206%</button>
    <button aria-label="Уменьшить" class="ml-1"><svg width="21" height="21" viewBox="0 0 21 21"><circle cx="10.500" cy="10.500" r="9" fill="#e2e9f2" stroke="#5e6f8c" stroke-width="1.500"/><path d="M5.500 9h10v3h-10z" fill="#46546e"/></svg></button>
    <label class="relative h-5 w-[126px]"><svg class="size-full" viewBox="0 0 126 20"><path d="M0 10.500h126" stroke="#46699d"/><path d="M0 11.500h126M63.500 6v9" stroke="#e6f0fc"/><path d="M72 3h9v10l-4.500 5-4.500-5z" fill="#eaf0f8" stroke="#52688e"/><path d="M76.500 6v8" stroke="#9db0cc"/></svg><input type="range" aria-label="Масштаб" min="10" max="500" value="206" class="absolute inset-0 w-full opacity-0"></label>
    <button aria-label="Увеличить" class="mr-1"><svg width="21" height="21" viewBox="0 0 21 21"><circle cx="10.500" cy="10.500" r="9" fill="#e2e9f2" stroke="#5e6f8c" stroke-width="1.500"/><path d="M5 9.500h4.500V5h2v4.500H16v2h-4.500V16h-2v-4.500H5z" fill="#46546e"/></svg></button>
  </div>
</footer>

<div class="flex h-[37px] shrink-0 items-stretch bg-linear-to-b from-[#1f55b4] from-0% via-[#2a63dd] via-20% to-[#2053cf] text-[13px] text-white">
  <button class="mt-[3px] flex w-28 items-center gap-1.5 rounded-r-xl bg-linear-to-b from-[#5fae5a] via-[#3a9138] to-[#368a34] pt-0.5 pl-2.5 font-['Open_Sans',sans-serif] text-[22px] leading-7 font-bold italic shadow-[inset_-3px_0_5px_#1f5f20] text-shadow-md"><svg width="24" height="23" viewBox="0 0 24 23"><path d="M3 3q4-4 9 0l-2 8q-4-3-8 0z" fill="#f0623a"/><path d="M13 3.500q5 3 10 0l-2 8q-5 3-10 0z" fill="#8cc63e"/><path d="M2 12q4-3 8 0l-2 8q-4-3-8 0z" fill="#5a8df0"/><path d="M11 12.500q5 3 10 0l-2 8q-5 3-10 0z" fill="#fad232"/></svg>пуск</button>
  <div class="ml-2.5 w-1.5 self-center"><svg width="6" height="24"><path d="M1.500 0v24M4.500 2v24" stroke="#0c2fa0" stroke-width="2" stroke-dasharray="2 3"/></svg></div>
  <div class="mt-1.5 mb-[3px] ml-1 flex min-w-0 gap-0.5">
    <button class="flex w-[158px] items-center gap-1.5 rounded-sm bg-linear-to-b from-[#5b96f8] from-0% via-[#3a7bf0] via-20% to-[#3a7af0] pt-0.5 pl-2.5"><svg width="18" height="20" viewBox="0 0 18 20"><path d="M1 2h13l3 3v14H3l-2-3z" fill="#4f93c4"/><circle cx="8.500" cy="10" r="7" fill="#bfe8e0"/><path d="M3.500 6.500h6M6.500 6.500v7M14 9.500q-4-1-4 2.500t4 2.500" fill="none" stroke="#35946b" stroke-width="2"/></svg>Total Command...</button>
    <button class="flex w-[158px] items-center gap-1.5 rounded-sm bg-linear-to-b from-[#5b96f8] from-0% via-[#3a7bf0] via-20% to-[#3a7af0] pt-0.5 pl-2"><svg width="20" height="20"><use href="#word"/></svg>Metoduka do op...</button>
    <button class="flex w-[158px] items-center gap-1.5 rounded-sm bg-[#1c4db4] pt-1 pl-2.5 shadow-[inset_1px_1px_2px_#0c2c80]"><svg width="19" height="20"><use href="#word"/></svg>Документ2 - Mi...</button>
    <button class="flex w-[158px] items-center gap-1.5 rounded-sm bg-linear-to-b from-[#5b96f8] from-0% via-[#3a7bf0] via-20% to-[#3a7af0] pt-0.5 pl-2"><svg width="20" height="20" viewBox="0 0 20 20"><path d="M4 1h4l1 2 3-2h4l-1 4h4l-3 4 3 2-4 2-2 4h-3l-3-1-3 2 1-4H1l2-5-1-3h2z" fill="#fff" stroke="#333"/><path d="M9 3h7l-4 6h4L4 17l3-6H3z" fill="#f8a51c" stroke="#6a430d" stroke-width=".7"/></svg>38. Андрей Губ...</button>
    <button class="flex w-[158px] items-center gap-1.5 rounded-sm bg-linear-to-b from-[#5b96f8] from-0% via-[#3a7bf0] via-20% to-[#3a7af0] pt-0.5 pl-2.5"><svg width="18" height="18" viewBox="0 0 18 18"><path d="M1 1h16v16H1z" fill="#ddbcec" stroke="#e80b12" stroke-width="1.600"/><path d="M9 3c2 0 0 8-5 11-2-1 10-7 12-4-1 2-7-4-7-7" fill="none" stroke="#54223e" stroke-width="1.200"/></svg>Adobe Acrobat ...</button>
  </div>
  <div class="ml-auto flex items-center">
    <svg width="6" height="24"><path d="M1.500 0v24M4.500 2v24" stroke="#0c2fa0" stroke-width="2" stroke-dasharray="2 3"/></svg>
    <button class="mr-[19px] ml-2 h-5 w-5 bg-[#316ac5] text-xs">EN</button>
  </div>
  <div class="relative mt-0.5 flex w-[136px] items-center border-l border-[#1042af] bg-linear-to-b from-[#19b9f4] from-0% via-[#1290e6] via-20% to-[#0f8fea] pl-2.5">
    <button aria-label="Скрыть значки" class="absolute -left-2.5"><svg class="block" width="18" height="18" viewBox="0 0 18 18"><circle cx="9" cy="9" r="8" fill="#2482e4" stroke="#98ddff"/><path d="M11 5L6.500 9l4.500 4" fill="none" stroke="#fff" stroke-width="2"/></svg></button>
    <div class="flex gap-[3px]"><svg width="19" height="19" viewBox="0 0 19 19"><path d="M0 0h19v19H0z" fill="#fff"/><path d="M1.500 1.500h16v16h-16z" fill="none" stroke="#159277"/><path d="M10 2h7v15h-7z" fill="#159277"/><path d="M8 5Q3 5 4 10t4 4M8 3v4" fill="none" stroke="#159277" stroke-width="1.800"/><path d="M11 5q5 0 4 5t-4 4M11 12v4" fill="none" stroke="#fff" stroke-width="1.800"/></svg><svg width="19" height="20" viewBox="0 0 19 20"><path d="M1 7l10-5 8 4-9 6z" fill="#6289c5" stroke="#39609c"/><path d="M5 10l5 3 7-4v6q-5 5-12 1z" fill="#3a66ad"/><path d="M9 5L3 8v8" fill="none" stroke="#f8b43a" stroke-width="2"/><path d="M1 14h4v5H1z" fill="#f8b43a"/></svg><svg width="20" height="20" viewBox="0 0 20 20"><path d="M.5.500h19v19H.5z" fill="#0000f0" stroke="#000036"/><path d="M5 4l10 6-10 6z" fill="#fff"/></svg></div>
    <time class="ml-auto pr-[15px]">16:29</time>
  </div>
</div>

<script>
  const NS = "http://www.w3.org/2000/svg";
  const add = (parent, tag, attrs, text) => {
    const el = document.createElementNS(NS, tag);
    for (const k in attrs) el.setAttribute(k, attrs[k]);
    if (text !== undefined) el.textContent = text;
    parent.appendChild(el);
  };
  const step = 97.2;

  const h = document.getElementById("hruler");
  for (let n = 1; n <= 14; n++) {
    const x = Math.round(49.5 + (n - 2) * step);
    if (n > 1) add(h, "text", { x, y: 21, "text-anchor": "middle" }, n);
    add(h, "rect", { x: x - 25, y: 16, width: 1, height: 2 });
    add(h, "rect", { x: x + 24, y: 16, width: 1, height: 2 });
    add(h, "rect", { x: x + 49, y: 14, width: 1, height: 6 });
    add(h, "rect", { x: Math.round(98 + (n - 1) * 121.5), y: 26, width: 1, height: 3 });
  }

  const v = document.getElementById("vruler");
  for (let n = 2; n <= 9; n++) {
    const y = Math.round(56 + (n - 2) * step);
    add(v, "text", { transform: `translate(19 ${y}) rotate(-90)`, "text-anchor": "middle" }, n);
    add(v, "rect", { x: 13, y: y - 25, width: 2, height: 1 });
    add(v, "rect", { x: 13, y: y + 24, width: 2, height: 1 });
    add(v, "rect", { x: 11, y: y - 49, width: 6, height: 1 });
  }

  const rays = document.getElementById("rays");
  for (let i = 0; i < 6; i++) add(rays, "use", { href: "#ray", x: 300.8 + i * 123.5 });
</script>
</body>
</html>
